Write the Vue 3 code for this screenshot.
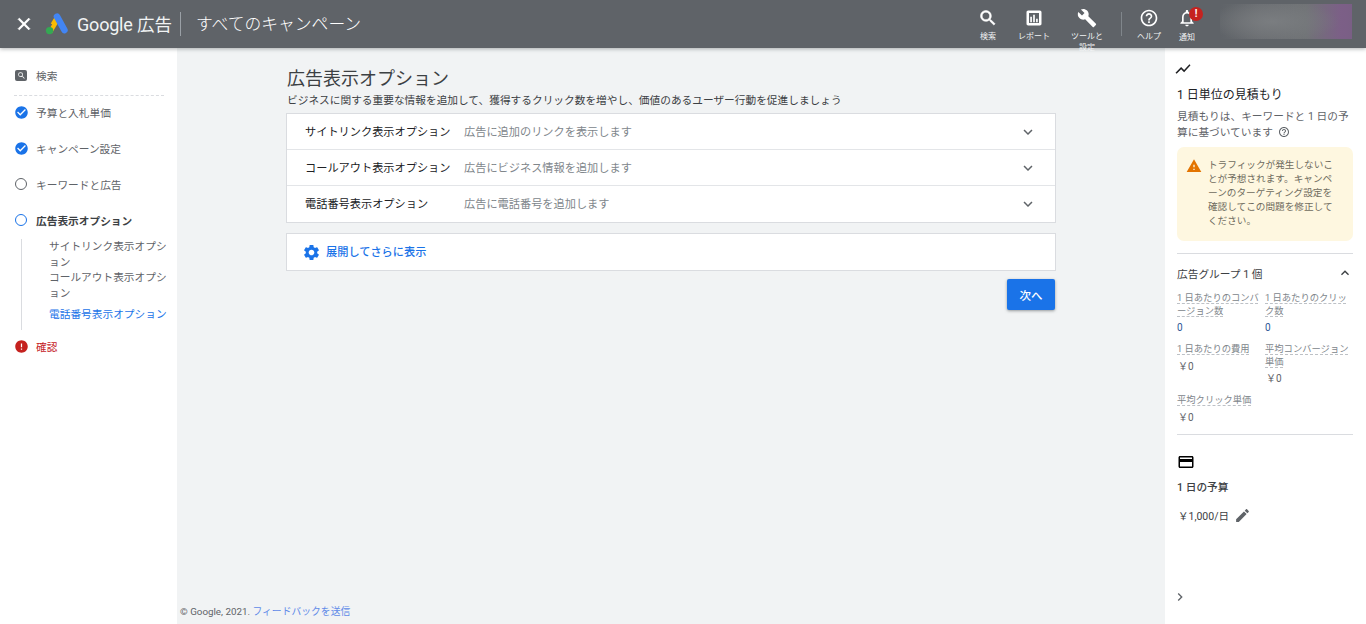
<template>
  <div class="app">
    <header class="topbar">
      <svg class="close" viewBox="0 0 24 24"><path :d="icons.close" /></svg>
      <svg class="logo" viewBox="0 0 24 22">
        <path d="M14.6 2.6 8.9 12.4l-3.1-1.9L11 1.7z" fill="#fbbc04" />
        <path d="M3 18.5 9.6 7l3.8 2.2L7 20.2z" fill="#fbbc04" />
        <path d="M12 3.6 19.4 17" stroke="#4285f4" stroke-width="6.6" stroke-linecap="round" fill="none" />
        <circle cx="4.6" cy="17.6" r="3.7" fill="#34a853" />
      </svg>
      <span class="brand"><span class="brand-g">Google</span> 広告</span>
      <span class="vline first"></span>
      <span class="crumb">すべてのキャンペーン</span>
      <nav class="tools">
        <div v-for="t in tools" :key="t.label" class="tool" :class="t.cls">
          <span class="tool-icon">
            <svg viewBox="0 0 24 24"><path :d="t.icon" /></svg>
            <span v-if="t.badge" class="badge">!</span>
          </span>
          <span class="tool-label">{{ t.label }}</span>
        </div>
      </nav>
      <div class="account"></div>
    </header>

    <div class="body">
      <aside class="side">
        <div class="step search">
          <span class="search-ico"><svg viewBox="0 0 24 24"><path :d="icons.search" /></svg></span>
          <span>検索</span>
        </div>
        <div class="dash"></div>
        <div v-for="s in steps" :key="s.label" class="step" :class="s.cls">
          <svg v-if="s.icon" class="st-ico" viewBox="0 0 24 24"><path :d="s.icon" /></svg>
          <span v-else class="ring"></span>
          <span>{{ s.label }}</span>
        </div>
        <div class="subs">
          <div class="sub">サイトリンク表示オプション</div>
          <div class="sub">コールアウト表示オプション</div>
          <div class="sub on">電話番号表示オプション</div>
        </div>
        <div class="step err">
          <svg class="st-ico" viewBox="0 0 24 24"><path :d="icons.error" /></svg>
          <span>確認</span>
        </div>
      </aside>

      <main class="main">
        <div class="content">
          <h1>広告表示オプション</h1>
          <p class="lead">ビジネスに関する重要な情報を追加して、獲得するクリック数を増やし、価値のあるユーザー行動を促進しましょう</p>
          <section class="card">
            <div v-for="r in rows" :key="r.t" class="row">
              <span class="r-title">{{ r.t }}</span>
              <span class="r-desc">{{ r.d }}</span>
              <svg class="chev" viewBox="0 0 24 24"><path :d="icons.more" /></svg>
            </div>
          </section>
          <section class="card expand">
            <svg viewBox="0 0 24 24"><path :d="icons.gear" /></svg>
            <span>展開してさらに表示</span>
          </section>
          <div class="actions"><button class="next">次へ</button></div>
        </div>
        <footer class="foot">© Google, 2021. <span>フィードバックを送信</span></footer>
      </main>

      <aside class="panel">
        <svg class="p-ico chart" viewBox="0 0 24 24"><path :d="icons.chart" /></svg>
        <h2 class="est">1 日単位の見積もり</h2>
        <p class="note">見積もりは、キーワードと 1 日の予算に基づいています<svg class="q" viewBox="0 0 24 24"><path :d="icons.help" /></svg></p>
        <div class="warn">
          <svg viewBox="0 0 24 24"><path :d="icons.warning" /></svg>
          <p>トラフィックが発生しないことが予想されます。キャンペーンのターゲティング設定を確認してこの問題を修正してください。</p>
        </div>
        <div class="rule"></div>
        <div class="group-head">
          <span>広告グループ 1 個</span>
          <svg viewBox="0 0 24 24"><path :d="icons.less" /></svg>
        </div>
        <div class="metrics">
          <div v-for="m in metrics" :key="m.l" class="metric">
            <span class="m-label">{{ m.l }}</span>
            <span class="m-val" :class="{ yen: m.yen }">{{ m.v }}</span>
          </div>
        </div>
        <div class="rule two"></div>
        <svg class="p-ico cardi" viewBox="0 0 24 24"><path :d="icons.card" /></svg>
        <h3>1 日の予算</h3>
        <div class="budget">
          <span>￥1,000/日</span>
          <svg viewBox="0 0 24 24"><path :d="icons.edit" /></svg>
        </div>
        <svg class="collapse" viewBox="0 0 24 24"><path :d="icons.right" /></svg>
      </aside>
    </div>
  </div>
</template>

<script setup>
const circle = 'M12 2C6.48 2 2 6.48 2 12s4.48 10 10 10 10-4.48 10-10S17.52 2 12 2z'
const icons = {
  close: 'M19 6.41L17.59 5 12 10.59 6.41 5 5 6.41 10.59 12 5 17.59 6.41 19 12 13.41 17.59 19 19 17.59 13.41 12z',
  search: 'M15.5 14h-.79l-.28-.27A6.471 6.471 0 0 0 16 9.5 6.5 6.5 0 1 0 9.5 16c1.61 0 3.09-.59 4.23-1.57l.27.28v.79l5 4.99L20.49 19l-4.99-5zm-6 0C7.01 14 5 11.99 5 9.5S7.01 5 9.5 5 14 7.01 14 9.5 11.99 14 9.5 14z',
  report: 'M19 3H5c-1.1 0-2 .9-2 2v14c0 1.1.9 2 2 2h14c1.1 0 2-.9 2-2V5c0-1.1-.9-2-2-2zm-1 15H6V6h12v12zM7.5 10.5h2V17h-2zM11 8h2v9h-2zM14.5 13h2v4h-2z',
  build: 'M22.7 19l-9.1-9.1c.9-2.3.4-5-1.5-6.9-2-2-5-2.4-7.4-1.3L9 6 6 9 1.6 4.7C.4 7.1.9 10.1 2.9 12.1c1.9 1.9 4.6 2.4 6.9 1.5l9.1 9.1c.4.4 1 .4 1.4 0l2.3-2.3c.5-.4.5-1.1.1-1.4z',
  help: 'M11 18h2v-2h-2v2zm1-16C6.48 2 2 6.48 2 12s4.48 10 10 10 10-4.48 10-10S17.52 2 12 2zm0 18c-4.41 0-8-3.59-8-8s3.59-8 8-8 8 3.59 8 8-3.59 8-8 8zm0-14c-2.21 0-4 1.79-4 4h2c0-1.1.9-2 2-2s2 .9 2 2c0 2-3 1.75-3 5h2c0-2.25 3-2.5 3-5 0-2.21-1.79-4-4-4z',
  bell: 'M12 22c1.1 0 2-.9 2-2h-4c0 1.1.9 2 2 2zm6-6v-5c0-3.07-1.63-5.64-4.5-6.32V4c0-.83-.67-1.5-1.5-1.5s-1.5.67-1.5 1.5v.68C7.64 5.36 6 7.92 6 11v5l-2 2v1h16v-1l-2-2zm-2 1H8v-6c0-2.48 1.51-4.5 4-4.5s4 2.02 4 4.5v6z',
  more: 'M16.59 8.59L12 13.17 7.41 8.59 6 10l6 6 6-6z',
  less: 'M12 8l-6 6 1.41 1.41L12 10.83l4.59 4.58L18 14z',
  right: 'M10 6L8.59 7.41 13.17 12l-4.58 4.59L10 18l6-6z',
  gear: 'M19.14 12.94c.04-.3.06-.61.06-.94 0-.32-.02-.64-.07-.94l2.03-1.58c.18-.14.23-.41.12-.61l-1.92-3.32c-.12-.22-.37-.29-.59-.22l-2.39.96c-.5-.38-1.03-.7-1.62-.94l-.36-2.54c-.04-.24-.24-.41-.48-.41h-3.84c-.24 0-.43.17-.47.41l-.36 2.54c-.59.24-1.13.57-1.62.94l-2.39-.96c-.22-.08-.47 0-.59.22L2.74 8.87c-.12.21-.08.47.12.61l2.03 1.58c-.05.3-.09.63-.09.94s.02.64.07.94l-2.03 1.58c-.18.14-.23.41-.12.61l1.92 3.32c.12.22.37.29.59.22l2.39-.96c.5.38 1.03.7 1.62.94l.36 2.54c.05.24.24.41.48.41h3.84c.24 0 .44-.17.47-.41l.36-2.54c.59-.24 1.13-.56 1.62-.94l2.39.96c.22.08.47 0 .59-.22l1.92-3.32c.12-.22.07-.47-.12-.61l-2.01-1.58zM12 15.6c-1.98 0-3.6-1.62-3.6-3.6s1.62-3.6 3.6-3.6 3.6 1.62 3.6 3.6-1.62 3.6-3.6 3.6z',
  chart: 'M3.5 18.49l6-6.01 4 4L22 6.92l-1.41-1.41-7.09 7.97-4-4L2 16.99z',
  card: 'M20 4H4c-1.11 0-1.99.89-1.99 2L2 18c0 1.11.89 2 2 2h16c1.11 0 2-.89 2-2V6c0-1.11-.89-2-2-2zm0 14H4v-6h16v6zm0-10H4V6h16v2z',
  edit: 'M3 17.25V21h3.75L17.81 9.94l-3.75-3.75L3 17.25zM20.71 7.04c.39-.39.39-1.02 0-1.41l-2.34-2.34c-.39-.39-1.02-.39-1.41 0l-1.83 1.83 3.75 3.75 1.83-1.83z',
  warning: 'M1 21h22L12 2 1 21zm12-3h-2v-2h2v2zm0-4h-2v-4h2v4z',
  check: circle + 'm-2 15l-5-5 1.41-1.41L10 14.17l7.59-7.59L19 8l-9 9z',
  error: circle + 'm1 15h-2v-2h2v2zm0-4h-2V7h2v6z'
}
const tools = [
  { label: '検索', icon: icons.search, cls: 't-search' },
  { label: 'レポート', icon: icons.report, cls: 't-report' },
  { label: 'ツールと設定', icon: icons.build, cls: 't-build' },
  { label: 'ヘルプ', icon: icons.help, cls: 't-help' },
  { label: '通知', icon: icons.bell, cls: 't-bell', badge: true }
]
const steps = [
  { label: '予算と入札単価', icon: icons.check, cls: 'done' },
  { label: 'キャンペーン設定', icon: icons.check, cls: 'done' },
  { label: 'キーワードと広告', cls: 'todo' },
  { label: '広告表示オプション', cls: 'current' }
]
const rows = [
  { t: 'サイトリンク表示オプション', d: '広告に追加のリンクを表示します' },
  { t: 'コールアウト表示オプション', d: '広告にビジネス情報を追加します' },
  { t: '電話番号表示オプション', d: '広告に電話番号を追加します' }
]
const metrics = [
  { l: '1 日あたりのコンバージョン数', v: '0' },
  { l: '1 日あたりのクリック数', v: '0' },
  { l: '1 日あたりの費用', v: '￥0', yen: true },
  { l: '平均コンバージョン単価', v: '￥0', yen: true },
  { l: '平均クリック単価', v: '￥0', yen: true }
]
</script>

<style>
html, body { margin: 0; overflow: hidden; }
</style>

<style scoped>
.app {
  width: 1366px; height: 624px; display: flex; flex-direction: column; overflow: hidden;
  font-family: Roboto, "Noto Sans CJK JP", sans-serif; color: #3c4043;
}
svg { display: block; fill: currentColor; flex: none; }
h1, h2, h3, p { margin: 0; font-weight: 400; }

.topbar {
  height: 48px; flex: none; background: #5f6368; color: #fff; display: flex; align-items: center;
  box-shadow: 0 1px 4px rgba(60,64,67,.4); position: relative; z-index: 2;
}
.close { width: 20px; height: 20px; margin-left: 14px; stroke: currentColor; stroke-width: 1; }
.logo { width: 24px; height: 22px; margin-left: 11px; }
.brand { margin: 0 0 2px 8px; font-size: 17.5px; color: #f1f3f4; white-space: nowrap; width: 94px; }
.brand-g { font-size: 18px; letter-spacing: -.2px; }
.vline { width: 1px; height: 24px; background: #9aa0a6; }
.first { margin-left: 9px; }
.crumb { margin: 0 0 2px 15px; font-size: 16.8px; color: #fff; font-weight: 300; white-space: nowrap; }
.tools { margin-left: auto; display: flex; align-items: flex-start; height: 48px; }
.tool { display: flex; flex-direction: column; align-items: center; padding-top: 8px; width: 46px; }
.tool-icon { position: relative; display: block; height: 20px; }
.tool-icon svg { width: 20px; height: 20px; }
.t-search .tool-icon svg { stroke: currentColor; stroke-width: .7; }
.tool-label { margin-top: 3px; font-size: 8px; line-height: 12px; text-align: center; color: #f1f3f4; white-space: normal; }
.t-build { width: 60px; }
.t-build .tool-label { width: 34px; line-height: 11px; margin-top: 3px; }
.t-help { margin-left: 15px; position: relative; width: 34px; }
.t-help::before { content: ""; position: absolute; left: -11px; top: 12px; width: 1px; height: 24px; background: #80868b; }
.t-bell { width: 34px; margin-left: 4px; }
.t-bell .tool-label { margin-top: 4px; }
.badge {
  position: absolute; left: 12px; top: -1px; width: 14px; height: 14px; border-radius: 50%;
  background: #c5221f; color: #fff; font-size: 10px; font-weight: 700; line-height: 14px; text-align: center;
}
.account {
  width: 132px; height: 35px; margin: 0 14px 5px 16px;
  background: radial-gradient(ellipse 50% 60% at 40% 50%, #7a7d80 0%, rgba(122,125,128,0) 100%),
              linear-gradient(90deg, #5f6368 0%, #6b6e72 30%, #707376 65%, #7c5f87 92%, #7a5f85 100%);
}

.body { flex: 1; display: flex; min-height: 0; }

.side { width: 177px; flex: none; background: #fff; font-size: 10.7px; box-sizing: border-box; padding-top: 10px; }
.step { height: 36px; display: flex; align-items: center; padding-left: 15px; gap: 7px; color: #5f6368; white-space: nowrap; }
.search { height: 35px; gap: 9px; }
.search-ico { width: 12px; height: 11px; background: #5f6368; border-radius: 2px; color: #fff; display: flex; align-items: center; justify-content: center; }
.search-ico svg { width: 9px; height: 9px; }
.dash { width: 150px; margin: 2px 0 -2px 14px; border-top: 1px dashed #dadce0; }
.st-ico { width: 15px; height: 15px; margin-left: -1px; }
.done .st-ico { color: #1a73e8; }
.ring { width: 12px; height: 12px; box-sizing: border-box; border: 1.5px solid #5f6368; border-radius: 50%; margin-right: 2px; }
.current .ring { border-color: #1a73e8; }
.current { font-weight: 700; color: #3c4043; }
.subs { margin: 1px 0 0 21px; border-left: 1px solid #dadce0; padding: 0 0 7px 27px; font-size: 10.7px; line-height: 15.5px; width: 128px; }
.sub { color: #5f6368; word-break: break-all; }
.on { color: #1a73e8; margin-top: 6px; }
.err { color: #c5221f; margin-top: -1px; }

.main { flex: 1; background: #f1f3f4; position: relative; display: flex; flex-direction: column; min-width: 0; }
.content { width: 770px; margin-left: 109px; box-sizing: border-box; flex: 1; }
h1 { font-size: 18px; line-height: 24px; margin: 19px 0 0 1px; color: #3c4043; }
.lead { font-size: 10.7px; line-height: 16px; color: #3c4043; white-space: nowrap; margin: 2px 0 4px 1px; }
.card { background: #fff; border: 1px solid #dadce0; }
.row { height: 36px; display: flex; align-items: center; padding-left: 18px; border-top: 1px solid #e3e5e8; box-sizing: border-box; }
.row:first-child { border-top: 0; height: 35px; }
.row:last-child { height: 37px; }
.r-title { width: 159px; font-size: 11.2px; color: #202124; white-space: nowrap; margin-bottom: 2px; }
.r-desc { font-size: 11.2px; color: #80868b; white-space: nowrap; margin-bottom: 2px; }
.chev { width: 18px; height: 18px; margin-left: auto; margin-right: 18px; color: #5f6368; }
.expand { margin-top: 10px; height: 38px; display: flex; align-items: center; padding-left: 15px; color: #1a73e8; font-size: 11.2px; font-weight: 500; box-sizing: border-box; }
.expand svg { width: 19px; height: 19px; margin-right: 5px; }
.expand span { margin-bottom: 2px; }
.actions { display: flex; justify-content: flex-end; margin-top: 8px; padding-right: 1px; }
.next {
  width: 48px; height: 31px; border: 0; border-radius: 2px; background: #1a73e8; color: #fff; padding: 0;
  font: 500 11.5px Roboto, "Noto Sans CJK JP", sans-serif; box-shadow: 0 1px 3px rgba(60,64,67,.5);
}
.foot { font-size: 9.8px; line-height: 14px; color: #5f6368; padding: 0 0 5px 3px; }
.foot span { color: #5f8ae8; }

.panel { width: 201px; flex: none; background: #fff; box-sizing: border-box; padding: 12px 13px 0 12px; position: relative; }
.chart { width: 18px; height: 18px; margin-left: -3px; color: #202124; }
.est { font-size: 12px; line-height: 18px; margin-top: 8px; color: #202124; }
.note { font-size: 10.7px; line-height: 16px; margin-top: 5px; color: #5f6368; }
.q { display: inline-block; vertical-align: -2px; width: 12px; height: 12px; margin-left: 5px; color: #5f6368; }
.warn { margin-top: 6px; background: #fef7e0; border-radius: 7px; height: 94px; display: flex; box-sizing: border-box; padding: 11px 0 0 9px; }
.warn svg { width: 16px; height: 16px; color: #e37400; }
.warn p { font-size: 9.65px; line-height: 14px; color: #6e6b5e; margin-left: 6px; width: 130px; }
.rule { border-top: 1px solid #dadce0; margin-top: 12px; }
.group-head { display: flex; justify-content: space-between; align-items: center; margin-top: 11px; font-size: 10.7px; color: #3c4043; height: 16px; }
.group-head svg { width: 16px; height: 16px; }
.metrics { display: grid; grid-template-columns: 88px 88px; margin-top: 11px; row-gap: 9px; align-content: start; }
.metric { display: flex; flex-direction: column; align-items: flex-start; font-size: 9.3px; }
.m-label { line-height: 12.5px; color: #80868b; text-decoration: underline dashed #bdc1c6; text-underline-offset: 2px; }
.m-val { font-size: 10px; margin-top: 5px; line-height: 12px; color: #2b5797; }
.yen { color: #5f6368; padding-left: 1px; }
.two { margin-top: 10px; }
.cardi { width: 18px; height: 18px; margin-top: 18px; margin-left: 0; color: #000; }
h3 { font-size: 10.7px; font-weight: 500; line-height: 14px; margin-top: 10px; color: #3c4043; }
.budget { display: flex; align-items: center; gap: 5px; margin-top: 12px; padding-left: 1px; font-size: 10.5px; color: #3c4043; }
.budget svg { width: 17px; height: 17px; color: #5f6368; }
.collapse { position: absolute; left: 7px; bottom: 19px; width: 16px; height: 16px; color: #5f6368; }
</style>
